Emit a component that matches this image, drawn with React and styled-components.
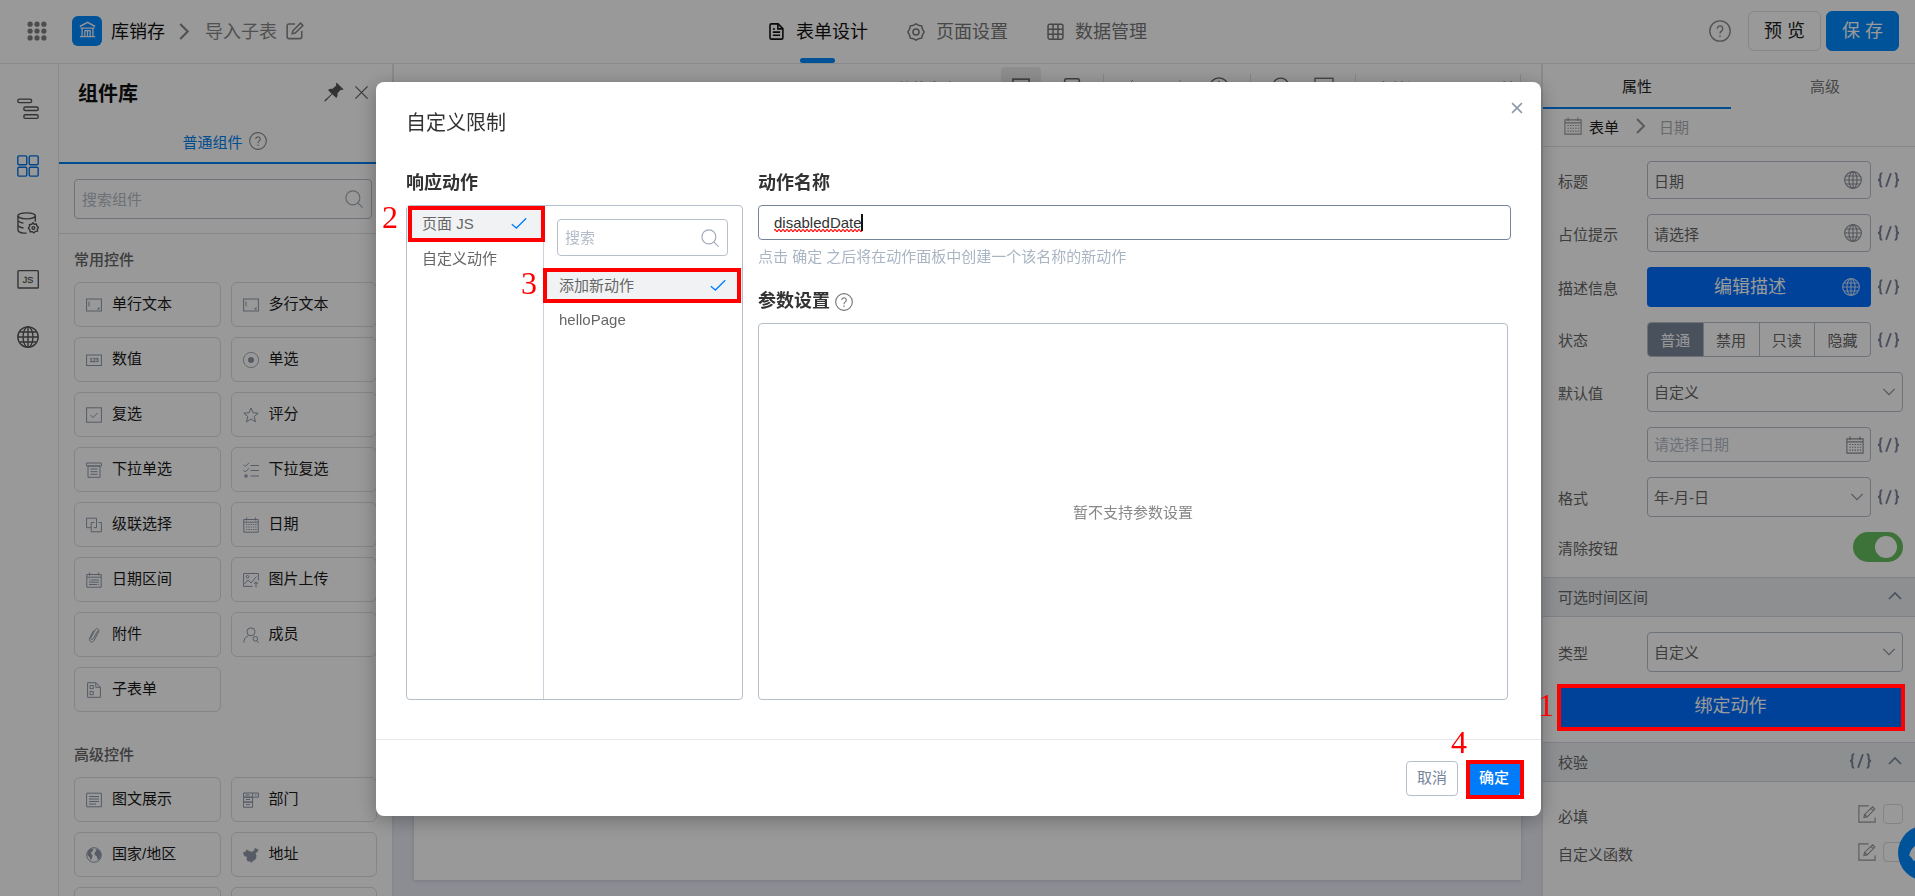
import React from 'react';
import styled, { createGlobalStyle, css } from 'styled-components';

const GlobalStyle = createGlobalStyle`
  * {
    box-sizing: border-box;
  }
  body {
    margin: 0;
    overflow: hidden;
    background: #fff;
  }
  body, button, input, select {
    font-family: 'Liberation Sans', 'Noto Sans CJK SC', sans-serif;
    font-size: 15px;
    color: #666;
  }
  button {
    padding: 0;
    border: 0;
    background: none;
    cursor: pointer;
  }
  svg {
    display: block;
    flex: none;
  }
`;

/* ---------- icons ---------- */

const Svg = styled.svg`
  width: ${(p) => p.$w}px;
  height: ${(p) => p.$h || p.$w}px;
  color: ${(p) => p.$color || 'inherit'};
  fill: none;
  stroke: currentColor;
  stroke-width: ${(p) => p.$stroke || 1};
`;

const shapes = {
  dots: (
    <g fill="currentColor" stroke="none">
      {[2.5, 8, 13.5].map((y) => [2.5, 8, 13.5].map((x) => <circle key={`${x}-${y}`} cx={x} cy={y} r="2.1" />))}
    </g>
  ),
  bank: (
    <>
      <path d="M.8 5.200 8 1.200l7.200 4" strokeWidth="1.400" />
      <path d="M1.500 6.600h13M.8 14.600h14.400M2.900 7v7.300M13.100 7v7.300M5.500 9h5v5.300M5.500 9v5.300M8 9v5.300" />
    </>
  ),
  chevronRight: <path d="M4 1l7 7-7 7" />,
  chevronDown: <path d="M1.500 4.500 8 11l6.500-6.500" />,
  chevronUp: <path d="M2 11l6-6 6 6" />,
  close: <path d="M1.500 1.500l13 13M14.500 1.500l-13 13" />,
  check: <path d="M.8 9.200 5.400 13 15.200 3.200" />,
  search: (
    <>
      <circle cx="7" cy="7" r="6.2" />
      <path d="M11.400 11.400l4.200 4.200" />
    </>
  ),
  help: (
    <>
      <circle cx="8" cy="8" r="7.400" />
      <path d="M6 6.300a2 2 0 1 1 3.200 1.600C8.400 8.500 8 8.800 8 9.900M8 11.200v1.200" />
    </>
  ),
  edit: (
    <>
      <path d="M8 1.800H2.600C1.600 1.800 1 2.400 1 3.400v9.800c0 1 .6 1.600 1.600 1.600h9.800c1 0 1.600-.6 1.600-1.600V8" />
      <path d="M5.500 10.500l.6-2.700L12.900 1l2.100 2.100-6.800 6.800z" />
    </>
  ),
  editSquare: (
    <>
      <path d="M9.500.8H.8v14.400h14.400V11" />
      <path d="M5.200 11.200l.6-2.800L13 1.600l2 2-6.900 7z M6 8.400l2 2M11.600 3l2 2" />
    </>
  ),
  doc: (
    <>
      <path d="M3.200.8h6.300L14 5.300v8.600c0 .8-.5 1.300-1.300 1.300H3.200c-.8 0-1.300-.5-1.300-1.300V2.100C1.900 1.300 2.400.8 3.200.8z" />
      <path d="M9.300 1v4.500H14M4.600 8.600h6.800M4.600 11.600h6.800M4.600 5.600h2" />
    </>
  ),
  gear: (
    <>
      <path d="M6.300 1.700 8 .8l1.700.9 1.300.5 2 .3.500 1.900.5 1.400L15.200 8l-1.200 2.200-.5 1.400-.5 1.900-2 .3-1.300.5-1.700.9-1.700-.9-1.300-.5-2-.3-.5-1.900-.5-1.400L.8 8 2 5.800l.5-1.400.5-1.900 2-.3z" />
      <circle cx="8" cy="8" r="2.700" />
    </>
  ),
  table: (
    <>
      <rect x="1" y="1.200" width="14" height="14" rx="1.500" />
      <path d="M1 5.800h14M1 10.500h14M5.700 1.200v14M10.300 1.200v14" />
    </>
  ),
  pin: (
    <path
      fill="currentColor"
      stroke="none"
      d="M10 .3l5.700 5.700-1.300.4-1-.2-2.600 2.800c.2 1.700-.1 2.900-.9 3.700L6.600 9.800 1.500 15.200l-1.300.6.500-1.400 5.400-5L3.200 6.300c.9-.8 2.100-1.100 3.700-.9l2.900-2.700-.2-1z"
    />
  ),
  outline: (
    <>
      <rect x=".6" y=".8" width="10" height="2.600" rx="1" />
      <rect x="5" y="6.500" width="10.400" height="2.600" rx="1" />
      <rect x="5" y="12.200" width="10.400" height="2.600" rx="1" />
    </>
  ),
  blocks: (
    <>
      <rect x=".6" y=".6" width="6.500" height="6.500" rx=".8" />
      <rect x="8.900" y=".6" width="6.500" height="6.500" rx=".8" />
      <rect x=".6" y="8.900" width="6.500" height="6.500" rx=".8" />
      <rect x="8.900" y="8.900" width="6.500" height="6.500" rx=".8" />
    </>
  ),
  database: (
    <>
      <ellipse cx="7" cy="2.800" rx="6.300" ry="2.200" />
      <path d="M.7 2.800v10.400c0 1.200 2.800 2.200 6.300 2.200M13.300 2.800V7M.7 6.200c.5 1 2 1.600 4 1.900M.7 9.700c.5 1 2 1.600 4 1.900" />
      <path d="M11.600 7.800l1 1.100 1.500-.2.400 1.500 1.200 1-.9 1.200.1 1.500-1.500.2-1.100 1.100-1.200-.9-1.600.1-.2-1.500-1.100-1.100.9-1.200v-1.500l1.600-.2z" />
      <circle cx="11.900" cy="11.600" r="1" />
    </>
  ),
  js: (
    <>
      <rect x=".7" y="1.200" width="14.800" height="12.600" rx=".6" />
      <text x="8" y="10.300" textAnchor="middle" fontSize="6.600" fill="currentColor" strokeWidth=".2">JS</text>
    </>
  ),
  globe: (
    <>
      <circle cx="8" cy="8" r="7.400" />
      <ellipse cx="8" cy="8" rx="3.600" ry="7.400" />
      <path d="M8 .6v14.800M.6 8h14.800M1.700 4.400h12.600M1.700 11.600h12.600" />
    </>
  ),
  code: <path d="M5.500.8C3.800.8 3.500 1.500 3.500 3v2.500C3.500 7 2.500 8 1 8c1.500 0 2.500 1 2.500 2.500V13c0 1.500.3 2.200 2 2.200M14.500 1l-5 14M18.500.8c1.700 0 2 .7 2 2.200v2.500C20.500 7 21.500 8 23 8c-1.500 0-2.500 1-2.500 2.500V13c0 1.500-.3 2.200-2 2.200" />,
  calendar: (
    <>
      <path d="M.8 2.500h14.400v12.700H.8zM.8 5.200h14.400M3.600.5v3M12.400.5v3" />
      <path strokeDasharray="1.300 1" d="M3 7.500h10.500M3 10h10.500M3 12.500h10.500" />
    </>
  ),
  range: <path d="M.8 2.500h14.400v12.700H.8zM.8 5.200h14.400M3.600.5v3M12.400.5v3M3 8h1.200M5.200 8H13M3 10.200h10M3 12.500h8M12 12.500h1" />,
  input: (
    <>
      <rect x=".6" y="2" width="14.800" height="12" />
      <path d="M3 4.500v5" />
      <path d="M13.500 9.800v2.700h-2.700z" fill="currentColor" stroke="none" />
    </>
  ),
  number: (
    <>
      <rect x=".6" y="3" width="14.800" height="10.500" />
      <text x="8" y="10.300" textAnchor="middle" fontSize="5.500" fill="currentColor" strokeWidth=".3">123</text>
    </>
  ),
  radio: (
    <>
      <circle cx="8" cy="8" r="7.600" strokeWidth=".8" />
      <circle cx="8" cy="8" r="3" fill="currentColor" stroke="none" />
    </>
  ),
  checkbox: (
    <>
      <rect x=".6" y=".8" width="14.800" height="14.400" />
      <path d="M4.500 8l2.500 2.500 4.500-4.500" />
    </>
  ),
  star: <path d="M8 .9l2 4.900 5.200.4-4 3.400 1.300 5.200L8 12l-4.500 2.800 1.300-5.200-4-3.400L6 5.800z" />,
  dropdown: <path d="M.6 1h14.800v3H.6zM2 4h12v11.300H2zM4.500 7h7M4.500 9.700h7M4.500 12.300h7" />,
  multi: (
    <>
      <path d="M.3 2.500l2 2L6 .8M.3 8l2 2L6 6.300M7.500 3.500H16M7.500 8.500H16M7.500 14H16" />
      <rect x="1.500" y="12.500" width="3" height="3" fill="currentColor" stroke="none" />
    </>
  ),
  cascade: <path d="M5 10.700H.6V1.200h9.900V5M8.500 5.500H5.200v9.300h10.200V5.500h-3M10.500 5v5.700H7.500" />,
  picture: (
    <>
      <path d="M9.500 14.400H.6V1.500h14.800v7" />
      <path d="M1.500 12l3.500-4 3 3 5.500-6.500M13 15.500V10M11 12l2-2.200 2 2.200" />
      <circle cx="4.500" cy="4.800" r="1.300" />
    </>
  ),
  clip: <path d="M11.800 3.800l-4.600 8c-.9 1.600-3 .5-2.200-1.200l4.200-7.800c1.400-2.400 4.700-.8 3.400 1.900l-4.400 8.600c-1.700 3.200-6 1.300-4.500-2.200l3.700-7.400" />,
  member: (
    <>
      <circle cx="8" cy="4.800" r="4" />
      <path d="M.7 15.500c.3-3.500 2-5.700 4.500-6.700M13.500 13.500l2 2.200" />
      <circle cx="12.300" cy="11.800" r="2.300" />
    </>
  ),
  subform: <path d="M1.600.7h8.300l4.500 4.500v10.100H1.600zM9.800.8v4.500h4.500M4 3.500h3.300v3.200H4zM4 9.500h3.300v3.200H4z" />,
  richtext: <path d="M.6 1.200h14.800v13.600H.6zM3 4.500h10M3 7h10M3 9.500h10M3 12h7" />,
  dept: <path d="M.6 1h14.800v4.200H.6zM.6 5.200h9v4.900h-9zM.6 10.100h9v5.200h-9zM9.600 1v4.200M3 7.500h4M3 12.700h4M12 3h1.500M2.500 3h4" />,
  earth: (
    <>
      <circle cx="8" cy="8" r="7.300" />
      <path fill="currentColor" stroke="none" d="M2 4l3-2.500 2.500.7-1 2L4.700 6l2 2.500-.8 2.500-1 2.500-1.400-3.300L1.200 7.800zM9.500 2l3.500 1 2 3.500-.5 4.500-2.700 2-1-3.500-2-1.500-.3-2.500L10.200 4z" />
    </>
  ),
  china: (
    <path
      fill="currentColor"
      stroke="none"
      d="M0 5.500l2.800-1.300 1-1.700 2.700 1.800 2.600.4 2.200-1.500.4-2.200 3.700 1.600-.6 2-2.300 1.600 1 2.500-.5 3-2.300 2-1.700 1-.8 1.200-.9-1.500-2.600.2L3.500 12 4 10 1.300 9z"
    />
  ),
  monitor: (
    <>
      <rect x=".8" y="1" width="14.400" height="11" />
      <path d="M4 15h8" />
    </>
  ),
  phone: <rect x="1.500" y=".6" width="13" height="15" rx="1.500" />,
  undo: <path d="M6 1L2 5l4 4M2 5h8a4 4 0 0 1 0 8H5" />,
  redo: <path d="M10 1l4 4-4 4M14 5H6a4 4 0 0 0 0 8h5" />,
  clock: (
    <>
      <circle cx="8" cy="8" r="7.400" />
      <path d="M8 3v5l3.500 2" />
    </>
  ),
  headset: <path fill="currentColor" stroke="none" d="M1 10c1-3 2-6 5-8l4 1v9l-5 3-2-3z" />,
};

const Icon = ({ name, size = 16, height, color, stroke, wide }) => (
  <Svg
    viewBox={wide ? '0 0 24 16' : '0 0 16 16'}
    $w={size}
    $h={height}
    $color={color}
    $stroke={stroke}
    aria-hidden="true"
  >
    {shapes[name]}
  </Svg>
);

/* ---------- page frame ---------- */

const Page = styled.div`
  display: flex;
  flex-direction: column;
  height: 100vh;
  overflow: hidden;
`;

const Header = styled.header`
  flex: none;
  display: grid;
  grid-template-columns: 1fr auto 1fr;
  height: 64px;
  padding: 0 16px;
  border-bottom: 1px solid #e6e6eb;
`;

const Crumbs = styled.div`
  display: flex;
  align-items: center;
  padding: 0 0 1px 11px;
  font-size: 18px;
  color: #888;
  > svg:first-child {
    margin-right: 25px;
  }
`;

const AppLogo = styled.span`
  display: flex;
  align-items: center;
  justify-content: center;
  width: 30px;
  height: 30px;
  margin-right: 9px;
  padding-bottom: 3px;
  border-radius: 6px;
  background: #0089ff;
`;

const AppName = styled.span`
  margin-right: 11px;
  padding-bottom: 3px;
  color: #111;
`;

const PageName = styled.span`
  margin: 0 9px 0 12px;
  padding-bottom: 3px;
`;

const HeaderTabs = styled.nav`
  display: flex;
  gap: 39px;
`;

const HeaderTab = styled.button`
  position: relative;
  display: flex;
  align-items: center;
  gap: 11px;
  font-size: 18px;
  color: ${(p) => (p.$active ? '#111' : '#777')};
  span {
    padding-bottom: 4px;
  }
  ${(p) =>
    p.$active &&
    css`
      &::after {
        content: '';
        position: absolute;
        left: 50%;
        bottom: 0;
        width: 35px;
        height: 5px;
        margin-left: -18px;
        border-radius: 3px;
        background: #0089ff;
      }
    `}
`;

const HeaderActions = styled.div`
  display: flex;
  align-items: center;
  justify-content: flex-end;
  gap: 5px;
  padding-bottom: 2px;
  color: #8a8a8a;
  > svg {
    margin-right: 12px;
  }
`;

const HeaderButton = styled.button`
  width: 73px;
  height: 40px;
  padding-bottom: 4px;
  border-radius: 6px;
  border: 1px solid ${(p) => (p.$primary ? '#0089ff' : '#e1e1e6')};
  background: ${(p) => (p.$primary ? '#0089ff' : '#fff')};
  color: ${(p) => (p.$primary ? '#fff' : '#222')};
  font-size: 18px;
`;

const Main = styled.main`
  flex: 1;
  min-height: 0;
  display: flex;
`;

const Rail = styled.nav`
  flex: none;
  display: flex;
  flex-direction: column;
  align-items: center;
  gap: 35px;
  width: 59px;
  padding: 34px 2px 0 0;
  border-right: 1px solid #e6e6eb;
  button {
    color: #555;
  }
  button[aria-current] {
    color: #0073e6;
  }
`;

/* ---------- component library ---------- */

const Library = styled.aside`
  flex: none;
  width: 335px;
  border-right: 2px solid #e3e4ec;
  overflow: hidden;
`;

const LibraryHead = styled.div`
  display: flex;
  align-items: center;
  gap: 10px;
  height: 60px;
  padding: 0 23px 4px 19px;
  color: #555;
  h2 {
    flex: 1;
    margin: 0;
    font-size: 20px;
    color: #111;
  }
`;

const LibraryTab = styled.button`
  display: flex;
  align-items: center;
  justify-content: center;
  gap: 6px;
  width: 100%;
  height: 40px;
  padding: 0 2px 4px 0;
  border-bottom: 2px solid #0080f0;
  color: #0080f0;
`;

const LibrarySearch = styled.div`
  padding: 15px 20px 14px 15px;
  border-bottom: 1px solid #dfe1e8;
`;

const SearchBox = styled.label`
  display: flex;
  align-items: center;
  height: ${(p) => p.$height}px;
  padding: 0 8px 0 7px;
  border: 1px solid #b8c0cc;
  border-radius: 4px;
  color: #a0a9b6;
  input {
    flex: 1;
    min-width: 0;
    padding: 0;
    border: 0;
    outline: 0;
    background: none;
  }
  input::placeholder {
    color: #b4bcc9;
  }
`;

const GroupTitle = styled.h3`
  margin: 0;
  padding: ${(p) => (p.$first ? 14 : 31)}px 15px 10px;
  font-size: 15px;
  font-weight: 500;
  line-height: 24px;
  color: #666;
`;

const WidgetGrid = styled.div`
  display: grid;
  grid-template-columns: 1fr 1fr;
  gap: 10px;
  padding: 0 15px;
`;

const Widget = styled.button`
  display: flex;
  align-items: center;
  gap: 10px;
  height: 45px;
  padding: 0 12px 0 11px;
  border: 1px solid #dedee2;
  border-radius: 6px;
  color: #1a1a1a;
  span {
    padding-bottom: 4px;
  }
`;

/* ---------- canvas ---------- */

const Workspace = styled.section`
  flex: 1;
  min-width: 0;
  display: flex;
  flex-direction: column;
  background: #e9ecf5;
`;

const Toolbar = styled.div`
  display: flex;
  align-items: center;
  justify-content: flex-end;
  gap: 20px;
  height: 46px;
  padding-right: 20px;
  background: #fff;
`;

const ToolButton = styled.button`
  display: flex;
  align-items: center;
  justify-content: center;
  min-width: ${(p) => (p.$active ? 40 : 22)}px;
  height: 40px;
  border-radius: 4px;
  background: ${(p) => (p.$active ? '#ededef' : 'none')};
`;

const SizeLabel = styled.span`
  margin-right: 24px;
`;

const ToolDivider = styled.span`
  width: 1px;
  height: 26px;
  background: #e1e1e6;
`;

const ToolEnd = styled.div`
  display: flex;
  align-items: center;
  gap: 4px;
`;

const Sheet = styled.div`
  flex: 1;
  margin: 20px 20px 16px;
  background: #fff;
  box-shadow: 0 1px 4px rgba(60, 70, 100, 0.2);
`;

/* ---------- property panel ---------- */

const Inspector = styled.aside`
  flex: none;
  width: 374px;
  border-left: 2px solid #e3e4ec;
`;

const InspectorTabs = styled.div`
  display: flex;
`;

const InspectorTab = styled.button`
  flex: 0 0 188px;
  height: 45px;
  border-bottom: 2px solid ${(p) => (p.$active ? '#0080f0' : 'transparent')};
  color: ${(p) => (p.$active ? '#222' : '#777')};
`;

const InspectorPath = styled.div`
  display: flex;
  align-items: center;
  gap: 7px;
  height: 38px;
  padding: 0 21px 3px;
  border-bottom: 1px solid #e1e3ea;
  color: #999;
  strong {
    font-weight: 400;
    color: #222;
    margin-right: 7px;
  }
  span {
    margin-left: 3px;
    color: #b0b0b0;
  }
`;

const Form = styled.div`
  display: flex;
  flex-direction: column;
  gap: 15px;
  padding: ${(p) => p.$top || 15}px 12px 15px 15px;
`;

const Field = styled.div`
  display: grid;
  grid-template-columns: 89px 1fr ${(p) => (p.$code ? '26px' : '')};
  align-items: center;
  > svg:last-child {
    justify-self: end;
    margin-right: 3px;
  }
`;

const Control = styled.div`
  display: flex;
  align-items: center;
  height: ${(p) => p.$height || 38}px;
  width: ${(p) => (p.$code ? 224 : 256)}px;
  padding: 0 ${(p) => (p.$height ? 6 : 8)}px 0 6px;
  border: 1px solid #b8c0cc;
  border-radius: 4px;
  color: #8a8f98;
  input {
    flex: 1;
    min-width: 0;
    padding: 0;
    border: 0;
    outline: 0;
    background: none;
  }
  input::placeholder {
    color: #b4bcc9;
  }
  select {
    flex: 1;
    padding: 0;
    border: 0;
    outline: 0;
    background: none;
    appearance: none;
  }
`;

const DescButton = styled.button`
  display: flex;
  align-items: center;
  width: 224px;
  height: 40px;
  padding: 0 11px;
  border-radius: 4px;
  background: #006fff;
  color: #fff;
  font-size: 18px;
  span {
    flex: 1;
    padding-bottom: 4px;
  }
`;

const Segments = styled.div`
  display: flex;
  width: 224px;
  height: 35px;
  border: 1px solid #b8c0cc;
  border-radius: 4px;
  overflow: hidden;
  label {
    flex: 1;
    display: flex;
    align-items: center;
    justify-content: center;
    border-left: 1px solid #b8c0cc;
  }
  label:first-child {
    border-left: 0;
  }
  label:has(input:checked) {
    background: #7b889c;
    color: #fff;
  }
  input {
    appearance: none;
    width: 0;
    margin: 0;
  }
`;

const Toggle = styled.input`
  appearance: none;
  justify-self: end;
  width: 50px;
  height: 30px;
  margin: 0;
  padding: 4px;
  border-radius: 15px;
  background: #67c05f;
  &::before {
    content: '';
    display: block;
    width: 22px;
    height: 22px;
    margin-left: 18px;
    border-radius: 50%;
    background: #fff;
  }
`;

const SectionBar = styled.div`
  display: flex;
  align-items: center;
  gap: 15px;
  height: 40px;
  padding: 0 12px 2px 15px;
  border: 1px solid #d3d9e2;
  border-width: 1px 0;
  background: #ebeef2;
  color: #7b889c;
  h3 {
    flex: 1;
    margin: 0;
    font-size: 15px;
    font-weight: 400;
    color: #666;
  }
`;

const BindRow = styled.div`
  position: relative;
`;

const BindButton = styled.button`
  display: block;
  width: 100%;
  height: 40px;
  padding-bottom: 6px;
  background: #006fff;
  color: #fff;
  font-size: 18px;
`;

const CheckRow = styled.div`
  display: flex;
  align-items: center;
  gap: 7px;
  height: 23px;
  label {
    flex: 1;
    padding-top: 4px;
  }
  svg {
    color: #999;
  }
  input {
    appearance: none;
    width: 20px;
    height: 20px;
    margin: 0;
    border: 1px solid #dcdce0;
    border-radius: 4px;
  }
`;

const HelpBubble = styled.button`
  position: fixed;
  right: -39px;
  bottom: 15px;
  width: 56px;
  height: 56px;
  padding-left: 10px;
  border-radius: 50%;
  background: #0089ff;
  color: #fff;
`;

/* ---------- numbered red marks ---------- */

const MarkFrame = styled.span`
  position: absolute;
  z-index: 20;
  inset: ${(p) => p.$inset};
  border: 4px solid #f00;
  pointer-events: none;
`;

const MarkNumber = styled.span`
  position: absolute;
  z-index: 20;
  top: ${(p) => p.$top}px;
  left: ${(p) => p.$left}px;
  font: 32px/32px 'Liberation Serif', serif;
  color: #f00;
`;

const Mark = ({ number, inset, top, left }) => (
  <>
    <MarkFrame $inset={inset} />
    <MarkNumber $top={top} $left={left}>{number}</MarkNumber>
  </>
);

/* ---------- dialog ---------- */

const Mask = styled.div`
  position: fixed;
  inset: 0;
  z-index: 10;
  display: flex;
  padding: 82px 374px 80px 376px;
  background: rgba(0, 0, 0, 0.4);
`;

const Dialog = styled.section`
  flex: 1;
  min-width: 0;
  display: flex;
  flex-direction: column;
  border-radius: 8px;
  background: #fff;
  box-shadow: 0 4px 20px rgba(0, 0, 0, 0.3);
`;

const DialogHead = styled.div`
  display: flex;
  justify-content: space-between;
  padding: 20px 18px 0 30px;
  h1 {
    margin: 0;
    padding-top: 6px;
    font-size: 20px;
    font-weight: 400;
    line-height: 30px;
    color: #333;
  }
  button {
    height: 12px;
    color: #8d99ab;
  }
`;

const DialogBody = styled.div`
  flex: 1;
  min-height: 0;
  display: grid;
  grid-template-columns: 337px 1fr;
  column-gap: 15px;
  padding: 32px 30px 39px;
`;

const Column = styled.div`
  display: flex;
  flex-direction: column;
  min-width: 0;
`;

const Caption = styled.label`
  display: flex;
  align-items: center;
  gap: 5px;
  padding-bottom: 8px;
  font-size: 18px;
  font-weight: 700;
  line-height: 27px;
  color: #333;
  svg {
    color: #777;
  }
`;

const Picker = styled.div`
  flex: 1;
  display: grid;
  grid-template-columns: 136px minmax(0, 1fr);
  border: 1px solid #b4becb;
  border-radius: 4px;
`;

const PickerList = styled.div`
  display: flex;
  flex-direction: column;
  & + & {
    border-left: 1px solid #ccd3dc;
  }
`;

const PickerSearch = styled.div`
  padding: 13px 14px 12px 13px;
`;

const PickerItem = styled.button`
  position: relative;
  display: flex;
  align-items: center;
  justify-content: space-between;
  flex: none;
  height: 35px;
  padding: 0 16px 2px 15px;
  background: ${(p) => (p.$selected ? '#f1f2f4' : 'none')};
`;

const NameBox = styled.div`
  position: relative;
  width: 753px;
  max-width: 100%;
  input {
    width: 100%;
    height: 35px;
    padding: 0 15px;
    border: 1px solid #76849b;
    border-radius: 4px;
    outline: 0;
    color: #333;
  }
`;

const SpellMark = styled.svg`
  position: absolute;
  left: 16px;
  top: 9px;
  width: 90px;
  height: 18px;
  pointer-events: none;
`;

const Hint = styled.p`
  margin: 0;
  padding: 7px 0 21px;
  line-height: 20px;
  color: #aab5c4;
`;

const ParamBox = styled.div`
  flex: 1;
  display: flex;
  align-items: center;
  justify-content: center;
  margin-right: 3px;
  border: 1px solid #b4becb;
  border-radius: 4px;
  color: #888;
`;

const DialogFoot = styled.div`
  display: flex;
  align-items: center;
  justify-content: flex-end;
  gap: 10px;
  height: 77px;
  padding-right: 21px;
  border-top: 1px solid #e6e8ec;
`;

const FootItem = styled.div`
  position: relative;
`;

const FootButton = styled.button`
  display: block;
  width: 52px;
  height: 35px;
  padding-bottom: 4px;
  border: 1px solid ${(p) => (p.$primary ? '#007bfa' : '#b4becb')};
  border-radius: 4px;
  background: ${(p) => (p.$primary ? '#007bfa' : '#fff')};
  color: ${(p) => (p.$primary ? '#fff' : '#76849b')};
  font-weight: ${(p) => (p.$primary ? 500 : 400)};
`;

/* ---------- data ---------- */

const railItems = [
  { icon: 'outline', label: '大纲' },
  { icon: 'blocks', label: '组件库', active: true },
  { icon: 'database', label: '数据源' },
  { icon: 'js', label: '脚本' },
  { icon: 'globe', label: '多语言' },
];

const commonWidgets = [
  ['input', '单行文本'],
  ['input', '多行文本'],
  ['number', '数值'],
  ['radio', '单选'],
  ['checkbox', '复选'],
  ['star', '评分'],
  ['dropdown', '下拉单选'],
  ['multi', '下拉复选'],
  ['cascade', '级联选择'],
  ['calendar', '日期'],
  ['range', '日期区间'],
  ['picture', '图片上传'],
  ['clip', '附件'],
  ['member', '成员'],
  ['subform', '子表单'],
];

const advancedWidgets = [
  ['richtext', '图文展示'],
  ['dept', '部门'],
  ['earth', '国家/地区'],
  ['china', '地址'],
  ['table', ''],
  ['doc', ''],
];

const Widgets = ({ items }) => (
  <WidgetGrid>
    {items.map(([icon, label], i) => (
      <Widget key={i}>
        <Icon name={icon} color="#8f98a8" />
        <span>{label}</span>
      </Widget>
    ))}
  </WidgetGrid>
);

const CodeIcon = () => <Icon name="code" wide size={23} height={16} color="#7b849c" stroke={2} />;

const App = () => (
  <Page>
    <GlobalStyle />

    <Header>
      <Crumbs>
        <Icon name="dots" size={20} color="#808080" />
        <AppLogo><Icon name="bank" size={17} color="#f0f6ff" stroke={1.2} /></AppLogo>
        <AppName>库销存</AppName>
        <Icon name="chevronRight" size={17} stroke={2} />
        <PageName>导入子表</PageName>
        <Icon name="edit" size={18} stroke={1.4} />
      </Crumbs>
      <HeaderTabs>
        <HeaderTab $active><Icon name="doc" size={17} stroke={1.5} /><span>表单设计</span></HeaderTab>
        <HeaderTab><Icon name="gear" size={18} stroke={1.3} /><span>页面设置</span></HeaderTab>
        <HeaderTab><Icon name="table" size={17} stroke={1.4} /><span>数据管理</span></HeaderTab>
      </HeaderTabs>
      <HeaderActions>
        <Icon name="help" size={22} />
        <HeaderButton>预 览</HeaderButton>
        <HeaderButton $primary>保 存</HeaderButton>
      </HeaderActions>
    </Header>

    <Main>
      <Rail>
        {railItems.map((item) => (
          <button key={item.icon} aria-label={item.label} aria-current={item.active ? 'page' : undefined}>
            <Icon name={item.icon} size={22} />
          </button>
        ))}
      </Rail>

      <Library>
        <LibraryHead>
          <h2>组件库</h2>
          <Icon name="pin" size={20} />
          <button aria-label="关闭组件库"><Icon name="close" size={15} stroke={1.4} /></button>
        </LibraryHead>
        <LibraryTab>
          普通组件
          <Icon name="help" size={18} color="#8a8a8a" />
        </LibraryTab>
        <LibrarySearch>
          <SearchBox $height={40} aria-label="搜索组件">
            <input placeholder="搜索组件" />
            <Icon name="search" size={18} />
          </SearchBox>
        </LibrarySearch>
        <GroupTitle $first>常用控件</GroupTitle>
        <Widgets items={commonWidgets} />
        <GroupTitle>高级控件</GroupTitle>
        <Widgets items={advancedWidgets} />
      </Library>

      <Workspace>
        <Toolbar>
          <SizeLabel>整体大小</SizeLabel>
          <ToolButton $active><Icon name="monitor" size={18} stroke={1.4} /></ToolButton>
          <ToolButton><Icon name="phone" size={18} height={22} stroke={1.4} /></ToolButton>
          <ToolDivider />
          <ToolButton><Icon name="undo" size={16} color="#999" /></ToolButton>
          <ToolButton><Icon name="redo" size={16} color="#bbb" /></ToolButton>
          <ToolButton><Icon name="clock" size={20} /></ToolButton>
          <ToolDivider />
          <ToolButton><Icon name="search" size={20} /></ToolButton>
          <ToolButton><Icon name="monitor" size={20} /></ToolButton>
          <ToolDivider />
          <ToolButton>表单设置</ToolButton>
          <ToolEnd>
            <ToolButton>页面属性</ToolButton>
            <ToolDivider />
          </ToolEnd>
        </Toolbar>
        <Sheet />
      </Workspace>

      <Inspector>
        <InspectorTabs>
          <InspectorTab $active>属性</InspectorTab>
          <InspectorTab>高级</InspectorTab>
        </InspectorTabs>
        <InspectorPath>
          <Icon name="calendar" size={18} />
          <strong>表单</strong>
          <Icon name="chevronRight" size={16} stroke={2} />
          <span>日期</span>
        </InspectorPath>
        <Form $top={14}>
          <Field $code>
            <label htmlFor="title">标题</label>
            <Control $code>
              <input id="title" defaultValue="日期" />
              <Icon name="globe" size={18} />
            </Control>
            <CodeIcon />
          </Field>
          <Field $code>
            <label htmlFor="hint">占位提示</label>
            <Control $code>
              <input id="hint" defaultValue="请选择" />
              <Icon name="globe" size={18} />
            </Control>
            <CodeIcon />
          </Field>
          <Field $code>
            <span>描述信息</span>
            <DescButton>
              <span>编辑描述</span>
              <Icon name="globe" size={18} color="#c4dcff" />
            </DescButton>
            <CodeIcon />
          </Field>
          <Field $code>
            <span>状态</span>
            <Segments>
              {['普通', '禁用', '只读', '隐藏'].map((name, i) => (
                <label key={name}>
                  <input type="radio" name="state" defaultChecked={i === 0} />
                  {name}
                </label>
              ))}
            </Segments>
            <CodeIcon />
          </Field>
          <Field>
            <label htmlFor="default">默认值</label>
            <Control $height={40}>
              <select id="default"><option>自定义</option></select>
              <Icon name="chevronDown" size={14} stroke={1.3} />
            </Control>
          </Field>
          <Field $code>
            <span />
            <Control $code $height={35}>
              <input aria-label="默认日期" placeholder="请选择日期" />
              <Icon name="calendar" size={18} />
            </Control>
            <CodeIcon />
          </Field>
          <Field $code>
            <label htmlFor="format">格式</label>
            <Control $code $height={40}>
              <select id="format"><option>年-月-日</option></select>
              <Icon name="chevronDown" size={14} stroke={1.3} />
            </Control>
            <CodeIcon />
          </Field>
          <Field>
            <label htmlFor="clear">清除按钮</label>
            <Toggle id="clear" type="checkbox" defaultChecked />
          </Field>
        </Form>

        <SectionBar>
          <h3>可选时间区间</h3>
          <Icon name="chevronUp" size={16} stroke={1.6} />
        </SectionBar>
        <Form>
          <Field>
            <label htmlFor="kind">类型</label>
            <Control $height={40}>
              <select id="kind"><option>自定义</option></select>
              <Icon name="chevronDown" size={14} stroke={1.3} />
            </Control>
          </Field>
          <BindRow>
            <BindButton>绑定动作</BindButton>
            <Mark number={1} inset="-3px -2px -4px -1px" top={2} left={-20} />
          </BindRow>
        </Form>

        <SectionBar>
          <h3>校验</h3>
          <CodeIcon />
          <Icon name="chevronUp" size={16} stroke={1.6} />
        </SectionBar>
        <Form $top={20}>
          <CheckRow>
            <label htmlFor="required">必填</label>
            <Icon name="editSquare" size={18} />
            <input id="required" type="checkbox" />
          </CheckRow>
          <CheckRow>
            <label htmlFor="custom">自定义函数</label>
            <Icon name="editSquare" size={18} />
            <input id="custom" type="checkbox" />
          </CheckRow>
        </Form>
      </Inspector>
    </Main>

    <HelpBubble aria-label="客服"><Icon name="headset" size={18} /></HelpBubble>

    <Mask>
      <Dialog role="dialog" aria-label="自定义限制">
        <DialogHead>
          <h1>自定义限制</h1>
          <button aria-label="关闭"><Icon name="close" size={12} stroke={2.2} /></button>
        </DialogHead>
        <DialogBody>
          <Column>
            <Caption as="div">响应动作</Caption>
            <Picker>
              <PickerList>
                <PickerItem $selected>
                  页面 JS
                  <Icon name="check" size={16} color="#0080ff" stroke={1.3} />
                  <Mark number={2} inset="0 -2px -1px 1px" top={-5} left={-25} />
                </PickerItem>
                <PickerItem>自定义动作</PickerItem>
              </PickerList>
              <PickerList>
                <PickerSearch>
                  <SearchBox $height={37} aria-label="搜索">
                    <input placeholder="搜索" />
                    <Icon name="search" size={18} />
                  </SearchBox>
                </PickerSearch>
                <PickerItem $selected>
                  添加新动作
                  <Icon name="check" size={16} color="#0080ff" stroke={1.3} />
                  <Mark number={3} inset="0 1px 0 -1px" top={-1} left={-23} />
                </PickerItem>
                <PickerItem>helloPage</PickerItem>
              </PickerList>
            </Picker>
          </Column>
          <Column>
            <Caption htmlFor="action-name">动作名称</Caption>
            <NameBox>
              <input id="action-name" defaultValue="disabledDate" spellCheck="false" />
              <SpellMark viewBox="0 0 90 18" fill="none" aria-hidden="true">
                <path
                  stroke="#f00"
                  strokeWidth="1.2"
                  d={`M0 16.500${' q1 -2 2 0 t2 0'.repeat(22)}`}
                />
                <path stroke="#111" strokeWidth="2" d="M88 0v17" />
              </SpellMark>
            </NameBox>
            <Hint>点击 确定 之后将在动作面板中创建一个该名称的新动作</Hint>
            <Caption as="div">
              参数设置
              <Icon name="help" size={18} />
            </Caption>
            <ParamBox>暂不支持参数设置</ParamBox>
          </Column>
        </DialogBody>
        <DialogFoot>
          <FootItem>
            <FootButton>取消</FootButton>
          </FootItem>
          <FootItem>
            <FootButton $primary>确定</FootButton>
            <Mark number={4} inset="-1px -4px -3px -2px" top={-35} left={-17} />
          </FootItem>
        </DialogFoot>
      </Dialog>
    </Mask>
  </Page>
);

export default App;
